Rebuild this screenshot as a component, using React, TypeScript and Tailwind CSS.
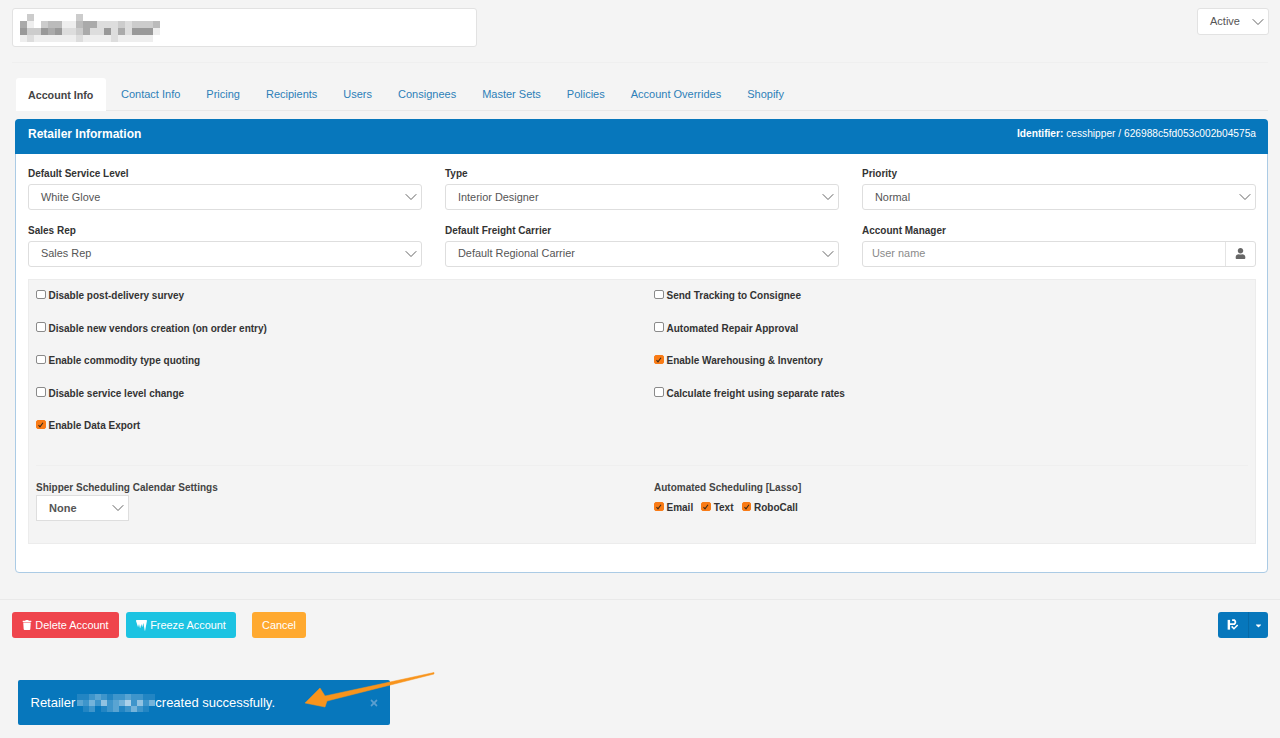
import React from "react";
import { ChevronDown } from "lucide-react";
import { FaTrash, FaIcicles, FaUser, FaTimes, FaCaretDown } from "react-icons/fa";

const tabs = ["Contact Info", "Pricing", "Recipients", "Users", "Consignees", "Master Sets", "Policies", "Account Overrides", "Shopify"];

function Select({ value, className = "" }: { value: string; className?: string }) {
  return (
    <div className={`flex items-center justify-between bg-white border border-[#dedede] rounded-[3px] text-[#555] text-[10.9px] pl-3 ${className}`}>
      <span>{value}</span>
      <ChevronDown size={20} strokeWidth={1.1} className="text-[#555]" />
    </div>
  );
}

function Field({ label, value }: { label: string; value: string }) {
  return (
    <div className="flex flex-col">
      <label className="text-[10px] font-bold text-[#333] h-[18px] leading-[15px]">{label}</label>
      <Select value={value} className="h-[26px]" />
    </div>
  );
}

function Check({ label, checked = false }: { label: string; checked?: boolean }) {
  return (
    <div className="flex items-center gap-[3px] h-[12px] leading-[12px] text-[10px] font-bold text-[#333]">
      <span className={`w-[9.5px] h-[9.5px] rounded-[2px] flex items-center justify-center -mt-[3px] border ${checked ? "bg-[#f97b16] border-[#f97b16]" : "bg-white border-[#8a8a8a]"}`}>
        {checked && (
          <svg viewBox="0 0 10 10" className="w-[8px] h-[8px]">
            <path d="M2 5.2 L4 7.5 L8 2" fill="none" stroke="#3a2a1a" strokeWidth="1.4" />
          </svg>
        )}
      </span>
      <span>{label}</span>
    </div>
  );
}

function Row({ label, checked }: { label: string; checked?: boolean }) {
  return (
    <div className="h-[32.5px]">
      <Check label={label} checked={checked} />
    </div>
  );
}

function Mosaic({ rows, color, size, className = "" }: { rows: string[]; color: string; size: number; className?: string }) {
  return (
    <svg className={className} width={rows[0].length * size} height={rows.length * size} shapeRendering="crispEdges">
      {rows.map((r, y) =>
        r.split("").map((c, x) =>
          c === "0" ? null : <rect key={`${x}-${y}`} x={x * size} y={y * size} width={size} height={size} fill={color} opacity={Number(c) / 9} />
        )
      )}
    </svg>
  );
}

export default function App() {
  return (
    <div className="relative w-[1280px] h-[738px] overflow-hidden bg-[#f4f4f4] font-['Liberation_Sans',Arial,sans-serif]">
      <div className="flex justify-between items-start pl-3 pr-[11px] pt-2">
        <div className="w-[465px] h-[39px] bg-white border border-[#e2e2e2] rounded-[3px] flex items-center pl-[7px]">
          <Mosaic
            size={7}
            color="#666"
            className="blur-[0.7px]"
            rows={[
              "03000000300000000000",
              "51034411455222323334",
              "63365622352262526661",
              "12111111211112111110",
            ]}
          />
        </div>
        <div className="w-[72px] h-[27px] bg-white border border-[#e2e2e2] rounded-[3px] flex items-center justify-between pl-[12px] text-[11px] text-[#555]">
          <span>Active</span>
          <ChevronDown size={20} strokeWidth={1.1} />
        </div>
      </div>

      <div className="mx-3 mt-[15px] border-t border-[#efefef]" />

      <div className="ml-4 mr-3 mt-[15px] flex h-[33px] border-b border-[#e8e8e8] text-[11px]">
        <div className="w-[90px] h-[33px] pl-3 pt-px flex items-center bg-white rounded-t-[3px] font-bold text-[10.7px] text-[#444]">Account Info</div>
        <div className="flex pl-[2px]">
          {tabs.map((t) => (
            <div key={t} className="px-3 mx-[1px] pt-px flex items-center text-[#2d7fb8]">{t}</div>
          ))}
        </div>
      </div>

      <div className="ml-[15px] mr-3 mt-2 h-[454px] bg-white border border-[#abcbe5] rounded-[4px] flex flex-col">
        <div className="h-[35px] -mx-px -mt-px shrink-0 bg-[#0777bc] rounded-t-[4px] flex items-center justify-between pl-[13px] pr-3 pb-[5px] text-white">
          <span className="text-[12px] font-bold">Retailer Information</span>
          <span className="text-[10.2px]"><b>Identifier:</b> cesshipper / 626988c5fd053c002b04575a</span>
        </div>
        <div className="pl-3 pr-[11px] pt-3">
          <div className="grid grid-cols-3 gap-x-[23px] gap-y-[12.5px]">
            <Field label="Default Service Level" value="White Glove" />
            <Field label="Type" value="Interior Designer" />
            <Field label="Priority" value="Normal" />
            <Field label="Sales Rep" value="Sales Rep" />
            <Field label="Default Freight Carrier" value="Default Regional Carrier" />
            <div className="flex flex-col">
              <label className="text-[10px] font-bold text-[#333] h-[18px] leading-[15px]">Account Manager</label>
              <div className="h-[26px] flex bg-white border border-[#dedede] rounded-[3px]">
                <div className="flex-1 flex items-center pl-[9px] text-[10.9px] text-[#8a8a8a]">User name</div>
                <div className="w-[30px] border-l border-[#e4e4e4] flex items-center justify-center text-[#666]">
                  <FaUser size={11} />
                </div>
              </div>
            </div>
          </div>

          <div className="mt-[12.5px] h-[265px] bg-[#f4f4f4] border border-[#ececec] px-[7px] pt-[10px]">
            <div className="grid grid-cols-2">
              <div className="flex flex-col">
                <Row label="Disable post-delivery survey" />
                <Row label="Disable new vendors creation (on order entry)" />
                <Row label="Enable commodity type quoting" />
                <Row label="Disable service level change" />
                <Row label="Enable Data Export" checked />
              </div>
              <div className="flex flex-col pl-3">
                <Row label="Send Tracking to Consignee" />
                <Row label="Automated Repair Approval" />
                <Row label="Enable Warehousing & Inventory" checked />
                <Row label="Calculate freight using separate rates" />
              </div>
            </div>
            <div className="mt-[12.5px] border-t border-[#efefef]" />
            <div className="grid grid-cols-2 pt-[14px]">
              <div>
                <div className="text-[10px] font-bold text-[#444] h-[15px] leading-[15px]">Shipper Scheduling Calendar Settings</div>
                <div className="w-[93px] h-[26px] bg-white border border-[#dedede] flex items-center justify-between pl-3 text-[11px] font-bold text-[#555]">
                  <span>None</span>
                  <ChevronDown size={20} strokeWidth={1.1} />
                </div>
              </div>
              <div className="pl-3">
                <div className="text-[10px] font-bold text-[#444] h-[15px] leading-[15px]">Automated Scheduling [Lasso]</div>
                <div className="flex gap-2 mt-[7px]">
                  <Check label="Email" checked />
                  <Check label="Text" checked />
                  <Check label="RoboCall" checked />
                </div>
              </div>
            </div>
          </div>
        </div>
      </div>

      <div className="mx-0 mt-[26px] border-t border-[#e9e9e9]" />

      <div className="flex items-center justify-between pl-3 pr-3 pt-3">
        <div className="flex text-[10.9px] text-white">
          <div className="h-[26px] w-[107px] bg-[#ef444c] rounded-[3px] flex items-center justify-center gap-[3px]">
            <FaTrash size={10} /> Delete Account
          </div>
          <div className="ml-[7px] h-[26px] w-[110px] bg-[#1cc3e2] rounded-[3px] flex items-center justify-center gap-[3px]">
            <FaIcicles size={11} /> Freeze Account
          </div>
          <div className="ml-4 h-[26px] w-[54px] bg-[#ffa92f] rounded-[3px] flex items-center justify-center">Cancel</div>
        </div>
        <div className="h-[26px] w-[50px] bg-[#0777bc] rounded-[3px] flex text-white">
          <div className="w-[31px] flex items-center justify-center border-r border-[#066aa8]">
            <svg viewBox="0 0 14 12" className="w-[13px] h-[12px]" fill="none" stroke="white">
              <path d="M2 0.5 V11" strokeWidth="2.6" />
              <path d="M3 5 H8 A2.6 2.6 0 0 0 8 0.8 H5.5" strokeWidth="1.9" />
              <path d="M5 7.5 L7.5 10 L11.5 6" strokeWidth="1.7" />
            </svg>
          </div>
          <div className="flex-1 flex items-center justify-center">
            <FaCaretDown size={9} />
          </div>
        </div>
      </div>

      <div className="absolute left-[18px] top-[680px] w-[372px] h-[45px] bg-[#0777bc] rounded-[2px] flex items-center pl-[12.5px] text-[13px] text-white">
        <span>Retailer</span>
        <Mosaic
          size={6}
          color="#ffffff"
          className="ml-[2px] blur-[0.6px]"
          rows={[
            "1123212232211",
            "3242523462524",
            "0120123124210",
          ]}
        />
        <span>created successfully.</span>
        <FaTimes size={10} className="absolute right-[11px] top-[18px] text-[#5b9fd0]" />
      </div>

      <svg className="absolute left-[295px] top-[665px]" width="150" height="50" viewBox="295 665 150 50">
        <path d="M434 672.5 L325 696 L320 688 L305 703 L325 707 L327 701 L434 674 Z" fill="#f8941d" stroke="#f8941d" strokeWidth="0.5" strokeLinejoin="round" />
      </svg>
    </div>
  );
}
